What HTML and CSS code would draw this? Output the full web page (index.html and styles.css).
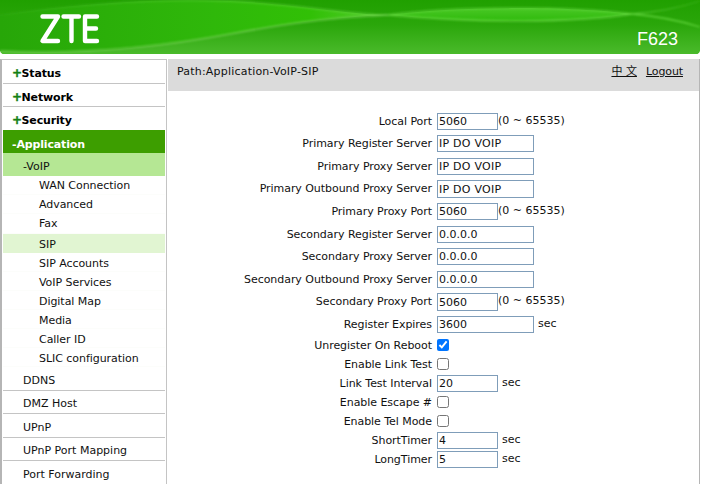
FILE: index.html
```html
<!DOCTYPE html>
<html lang="en">
<head>
<meta charset="utf-8">
<title>F623</title>
<link rel="stylesheet" href="styles.css">
</head>
<body>
<header class="banner">
  <svg class="waves" width="700" height="54" viewBox="0 0 700 54" aria-hidden="true">
    <defs>
      <linearGradient id="base" x1="0" y1="0" x2="0" y2="1"><stop offset="0" stop-color="#20a000"/><stop offset=".45" stop-color="#2aa60a"/><stop offset="1" stop-color="#4aba2b"/></linearGradient>
      <linearGradient id="leaf" x1="0" y1="0" x2="1" y2="0"><stop offset="0" stop-color="#27a608"/><stop offset=".55" stop-color="#2fb80a"/><stop offset=".8" stop-color="#31c006"/><stop offset="1" stop-color="#57ce30"/></linearGradient>
      <linearGradient id="lens" x1="0" y1="0" x2="0" y2="1"><stop offset="0" stop-color="#49c825"/><stop offset="1" stop-color="#2fba0c"/></linearGradient>
      <linearGradient id="edge" gradientUnits="userSpaceOnUse" x1="0" y1="0" x2="700" y2="0"><stop offset="0" stop-color="#5fc840" stop-opacity=".1"/><stop offset=".3" stop-color="#5fd03c" stop-opacity=".7"/><stop offset=".7" stop-color="#68d743"/><stop offset=".9" stop-color="#5fd03c"/><stop offset="1" stop-color="#4cc02c" stop-opacity=".4"/></linearGradient>
      <filter id="soft" x="-5%" y="-20%" width="110%" height="140%"><feGaussianBlur stdDeviation=".8"/></filter>
    </defs>
    <rect width="700" height="54" fill="url(#base)"/>
    <path d="M0 15C70 5 145-2 230 1C295 4 345 14 388 15C320 18 280 25 230 34C160 47 85 55 0 51Z" fill="url(#leaf)"/>
    <path d="M388 15C455 6 570 6 632 14C575 23 470 23 388 15Z" fill="url(#lens)"/>
    <g fill="none" filter="url(#soft)" stroke-width="1.3">
      <path d="M0 15C70 5 145-2 230 1C295 4 345 14 388 15C475 23 575 23 632 14Q670 11 700 1" stroke="url(#edge)"/>
      <path d="M0 51C85 55 160 47 230 34C280 25 320 18 388 15" stroke="#6acb4a" stroke-width="1.6"/>
      <path d="M388 15C455 6 570 6 632 14Q668 17 700 27" stroke="#5fd33a"/>
    </g>
    <path d="M0 51V54H2.500Q.5 53 0 51ZM700 51V54H697.500Q699.500 53 700 51Z" fill="#fff"/>
    <g fill="none" stroke="#fff" stroke-width="4.4" stroke-linejoin="round" stroke-linecap="round">
      <path d="M42.500 16.500H58L42.500 41H58M63.500 16.500H79M71.500 16.500V41M97 16.500H85V41H97M85 28.500H96"/>
    </g>
  </svg>
  <span class="model">F623</span>
</header>
<div class="page">
  <nav class="side">
    <div class="item top"><span><b class="plus">+</b>Status</span></div>
    <div class="item top short"><span><b class="plus">+</b>Network</span></div>
    <div class="item top last"><span><b class="plus">+</b>Security</span></div>
    <div class="item top open"><span>-Application</span></div>
    <div class="item group"><span>-VoIP</span></div>
    <div class="leaf"><span>WAN Connection</span></div>
    <div class="leaf"><span>Advanced</span></div>
    <div class="leaf tall"><span>Fax</span></div>
    <div class="leaf current"><span>SIP</span></div>
    <div class="leaf"><span>SIP Accounts</span></div>
    <div class="leaf"><span>VoIP Services</span></div>
    <div class="leaf"><span>Digital Map</span></div>
    <div class="leaf"><span>Media</span></div>
    <div class="leaf"><span>Caller ID</span></div>
    <div class="leaf"><span>SLIC configuration</span></div>
    <div class="item sub"><span>DDNS</span></div>
    <div class="item sub short"><span>DMZ Host</span></div>
    <div class="item sub"><span>UPnP</span></div>
    <div class="item sub short"><span>UPnP Port Mapping</span></div>
    <div class="item sub"><span>Port Forwarding</span></div>
  </nav>
  <main class="main">
    <div class="path"><span class="trail">Path:Application-VoIP-SIP</span><a class="zh" href="#">中 文</a><a class="logout" href="#">Logout</a></div>
    <form class="form">
      <div class="row r22"><label>Local Port</label><input class="narrow" value="5060"><span class="range">(0 ~ 65535)</span></div>
      <div class="row r23"><label>Primary Register Server</label><input class="words" value="IP DO VOIP"></div>
      <div class="row r22"><label>Primary Proxy Server</label><input class="words" value="IP DO VOIP"></div>
      <div class="row r23"><label>Primary Outbound Proxy Server</label><input class="words deep" value="IP DO VOIP"></div>
      <div class="row r23"><label>Primary Proxy Port</label><input class="narrow" value="5060"><span class="range">(0 ~ 65535)</span></div>
      <div class="row r22"><label>Secondary Register Server</label><input value="0.0.0.0"></div>
      <div class="row r23"><label>Secondary Proxy Server</label><input value="0.0.0.0"></div>
      <div class="row r22"><label>Secondary Outbound Proxy Server</label><input value="0.0.0.0"></div>
      <div class="row r23"><label>Secondary Proxy Port</label><input class="narrow deep" value="5060"><span class="range">(0 ~ 65535)</span></div>
      <div class="row r20"><label>Register Expires</label><input value="3600"><span class="unit">sec</span></div>
      <div class="row r19"><label>Unregister On Reboot</label><input type="checkbox" checked></div>
      <div class="row r19"><label>Enable Link Test</label><input type="checkbox"></div>
      <div class="row r19"><label>Link Test Interval</label><input class="narrow" value="20"><span class="unit">sec</span></div>
      <div class="row r19"><label>Enable Escape #</label><input type="checkbox"></div>
      <div class="row r19"><label>Enable Tel Mode</label><input type="checkbox"></div>
      <div class="row r19"><label>ShortTimer</label><input class="narrow" value="4"><span class="unit">sec</span></div>
      <div class="row r19"><label>LongTimer</label><input class="narrow" value="5"><span class="unit">sec</span></div>
    </form>
  </main>
</div>
</body>
</html>
```
FILE: styles.css
```css
* { box-sizing: border-box; }
body {
  margin: 0;
  height: 484px;
  overflow: hidden;
  background: #fff;
  color: #111;
  font: 11px/17px "DejaVu Sans", Verdana, "Noto Sans CJK SC", sans-serif;
}
.banner { position: relative; width: 700px; height: 54px; }
.waves { display: block; }
.model {
  position: absolute;
  right: 22px;
  top: 28px;
  color: #fff;
  font: 18px/22px "Liberation Sans", Arial, sans-serif;
}
.page {
  display: flex;
  width: 700px;
  height: 425px;
  margin-top: 5px;
  overflow: hidden;
  border-right: 1px solid #b5b5b5;
}
.side {
  flex: none;
  width: 167px;
  height: 440px;
  margin-right: 1px;
  padding: 0 1px 0 1px;
  border: 1px solid #c4c4c4;
  border-left: 2px solid #b5b5b5;
}
.item {
  display: flex;
  align-items: flex-end;
  height: 24px;
  border-bottom: 1px solid #c4c4c4;
}
.top { padding: 0 0 1px 9px; font-weight: bold; color: #000; letter-spacing: -.15px; }
.short { height: 23px; padding-bottom: 0; }
.plus { color: #148014; font-size: 12px; line-height: 15px; letter-spacing: -1.5px; margin-right: 1px; -webkit-text-stroke: .4px #148014; }
.last { border-bottom: 0; height: 23px; padding-bottom: 1px; }
.open { height: 23px; background: #3d9e00; color: #fff; border: 0; padding-bottom: 0; }
.group { height: 23px; padding: 0 0 1px 20px; background: #b5e794; border: 0; }
.leaf { height: 19px; padding-left: 36px; line-height: 20px; border-bottom: 1px solid #fcfdfb; letter-spacing: -.05px; }
.tall { height: 20px; }
.current { background: #e1f5d2; line-height: 22px; border: 0; }
.current ~ .leaf { line-height: 21px; }
.sub { padding: 0 0 1px 20px; }
.main { flex: 1; }
.path {
  display: flex;
  height: 32px;
  padding: 4px 16px 0 9px;
  background: #dbdbdb;
}
.trail { flex: 1; letter-spacing: .2px; }
.zh { margin-right: 9px; font-family: "DejaVu Sans", "Noto Sans CJK SC", sans-serif; }
.path a { color: #111; text-decoration: underline; }
.logout { letter-spacing: -.1px; }
.form { padding-top: 22px; }
.row { display: flex; align-items: flex-start; }
.r19 { height: 19px; padding-top: 1px; }
.r20 { height: 20px; }
.r22 { height: 22px; }
.r23 { height: 23px; }
label { width: 264px; margin-right: 5px; padding-top: 1px; line-height: 16px; text-align: right; white-space: nowrap; letter-spacing: -.05px; }
input {
  width: 97px;
  height: 17px;
  margin: 0;
  padding: 0 1px;
  border: 1px solid #7f9db9;
  border-radius: 0;
  background: #fff;
  color: #111;
  font: inherit;
}
.words { letter-spacing: .25px; }
.narrow { width: 61px; }
.deep { height: 18px; }
input[type="checkbox"] { width: 12px; height: 12px; margin-top: 2px; }
.range { line-height: 16px; }
.unit { margin-left: 4px; line-height: 16px; }
```
